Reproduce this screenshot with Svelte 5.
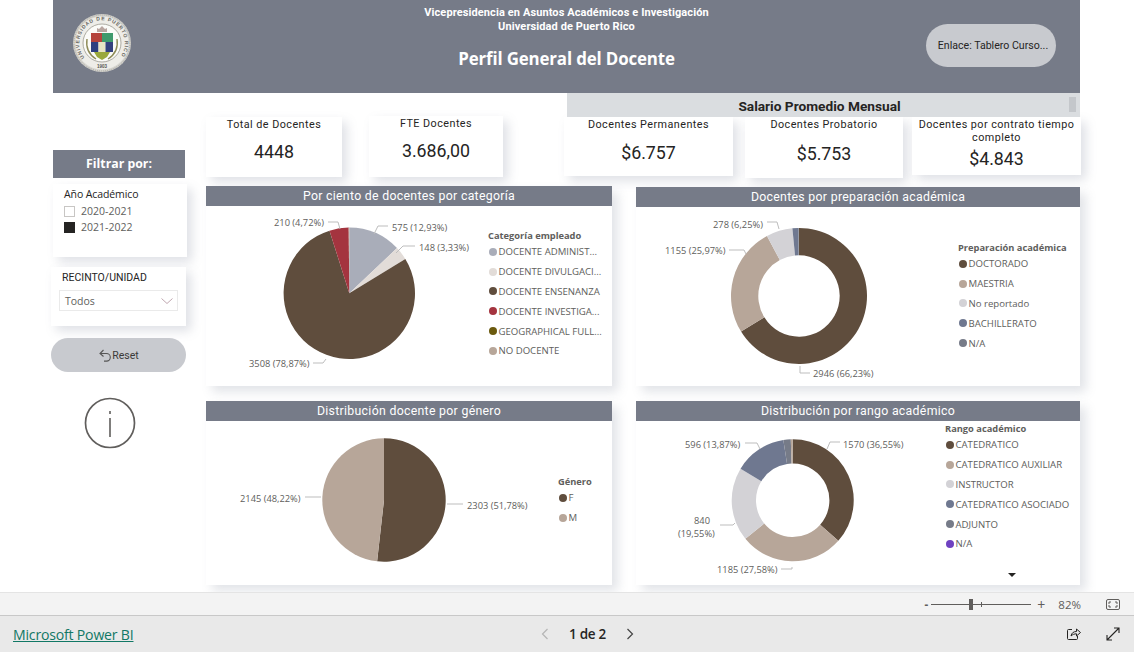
<script>
  const BROWN = '#5f4d3d', TAUPE = '#b7a699', LIGHT = '#d3d2d6', SLATE = '#6f7890', GREY = '#767b88';

  function polar(cx, cy, r, pct) {
    const a = (pct / 100) * Math.PI * 2;
    return [cx + r * Math.sin(a), cy - r * Math.cos(a)];
  }

  function slice(c, from, to) {
    const big = to - from > 50 ? 1 : 0;
    const [x1, y1] = polar(c.cx, c.cy, c.r, from);
    const [x2, y2] = polar(c.cx, c.cy, c.r, to);
    if (!c.inner) return `M${c.cx} ${c.cy}L${x1} ${y1}A${c.r} ${c.r} 0 ${big} 1 ${x2} ${y2}Z`;
    const [x3, y3] = polar(c.cx, c.cy, c.inner, to);
    const [x4, y4] = polar(c.cx, c.cy, c.inner, from);
    return `M${x1} ${y1}A${c.r} ${c.r} 0 ${big} 1 ${x2} ${y2}L${x3} ${y3}A${c.inner} ${c.inner} 0 ${big} 0 ${x4} ${y4}Z`;
  }

  function slices(c) {
    let at = 0;
    return c.parts.map(([pct, color]) => {
      const d = slice(c, at, at + pct);
      at += pct;
      return { d, color };
    });
  }

  // coordinates are local to each chart body, below the title strip
  const charts = [
    {
      title: 'Por ciento de docentes por categoría', cls: 'p1', w: 406, h: 179, svgW: 278,
      cx: 143.3, cy: 87.3, r: 65.7,
      parts: [[12.93, '#a9adb9'], [3.33, '#e2dcd8'], [78.87, BROWN], [4.72, '#a4343f'], [0.15, TAUPE]],
      labels: [
        { x: 186, y: 21, t: '575 (12,93%)' },
        { x: 213, y: 41, t: '148 (3,33%)' },
        { x: 68, y: 16, t: '210 (4,72%)' },
        { x: 43, y: 157, t: '3508 (78,87%)' }
      ],
      lines: ['M168 28L172 20H182', 'M190 47L197 40H209', 'M122 16H132L134 23', 'M107 157H117L120 153'],
      legendTitle: 'Categoría empleado', legendTop: 23,
      legend: [['DOCENTE ADMINIST...', '#a9adb9'], ['DOCENTE DIVULGACI...', '#e2dcd8'], ['DOCENTE ENSENANZA', BROWN], ['DOCENTE INVESTIGA...', '#a4343f'], ['GEOGRAPHICAL FULL...', '#6b5a0e'], ['NO DOCENTE', TAUPE]]
    },
    {
      title: 'Docentes por preparación académica', cls: 'p2', w: 444, h: 179, svgW: 318,
      cx: 163, cy: 89, r: 68, inner: 40.7,
      parts: [[66.23, BROWN], [25.97, TAUPE], [6.25, LIGHT], [1.4, SLATE], [0.15, GREY]],
      labels: [
        { x: 177, y: 166, t: '2946 (66,23%)' },
        { x: 29, y: 43, t: '1155 (25,97%)' },
        { x: 77, y: 17, t: '278 (6,25%)' }
      ],
      lines: ['M164 159V166H174', 'M93 43H108L110 47', 'M131 15H141L143 22'],
      legendTitle: 'Preparación académica', legendTop: 34,
      legend: [['DOCTORADO', BROWN], ['MAESTRIA', TAUPE], ['No reportado', LIGHT], ['BACHILLERATO', SLATE], ['N/A', GREY]]
    },
    {
      title: 'Distribución docente por género', cls: 'p3', w: 406, h: 164, svgW: 348,
      cx: 178, cy: 79, r: 61.7,
      parts: [[51.78, BROWN], [48.22, TAUPE]],
      labels: [
        { x: 34, y: 77, t: '2145 (48,22%)' },
        { x: 261, y: 84, t: '2303 (51,78%)' }
      ],
      lines: ['M99 76H115', 'M241 83H257'],
      legendTitle: 'Género', legendTop: 54,
      legend: [['F', BROWN], ['M', TAUPE]]
    },
    {
      title: 'Distribución por rango académico', cls: 'p4', w: 444, h: 164, svgW: 305,
      cx: 156.7, cy: 79.3, r: 61, inner: 36.7,
      parts: [[36.55, BROWN], [27.58, TAUPE], [19.55, LIGHT], [13.87, SLATE], [1.95, GREY], [0.5, TAUPE]],
      labels: [
        { x: 207, y: 23, t: '1570 (36,55%)' },
        { x: 49, y: 23, t: '596 (13,87%)' },
        { x: 58, y: 99, t: '840' },
        { x: 42, y: 112, t: '(19,55%)' },
        { x: 81, y: 148, t: '1185 (27,58%)' }
      ],
      lines: ['M191 28L194 21H204', 'M109 22H121L124 28', 'M84 104H97L99 102', 'M156 146V148H145'],
      legendTitle: 'Rango académico', legendTop: 1,
      legend: [['CATEDRATICO', BROWN], ['CATEDRATICO AUXILIAR', TAUPE], ['INSTRUCTOR', LIGHT], ['CATEDRATICO ASOCIADO', SLATE], ['ADJUNTO', GREY], ['N/A', '#6f42c1']],
      more: true
    }
  ];

  const kpis = [
    { label: 'Total de Docentes', value: '4448', cls: 'k1' },
    { label: 'FTE Docentes', value: '3.686,00', cls: 'k2' },
    { label: 'Docentes Permanentes', value: '$6.757', cls: 'k3' },
    { label: 'Docentes Probatorio', value: '$5.753', cls: 'k4' },
    { label: 'Docentes por contrato tiempo completo', value: '$4.843', cls: 'k5' }
  ];
</script>

<div class="page">
  <div class="canvas">
    <header class="banner">
      <div class="seal">
        <svg width="60" height="60" viewBox="0 0 60 60">
          <defs><path id="ring" d="M12.500 44.700A22.800 22.800 0 1 1 47.500 44.700" /></defs>
          <circle cx="30" cy="30" r="29" fill="#d6d5d0" />
          <circle cx="30" cy="30" r="28" fill="none" stroke="#a9a89f" stroke-width="1" stroke-dasharray="1 1" />
          <circle cx="30" cy="30" r="26.500" fill="#eeede8" />
          <text class="ring-text"><textPath href="#ring" textLength="100">UNIVERSIDAD DE PUERTO RICO</textPath></text>
          <circle cx="30" cy="30" r="19" fill="#fbfbf8" stroke="#8c8b80" stroke-width=".7" />
          <path d="M25 19v-4l2 1 3-3 3 3 2-1v4z" fill="#b9a6a0" />
          <rect x="19" y="20" width="11" height="9" fill="#b5433c" />
          <rect x="30" y="20" width="11" height="9" fill="#3f9a6c" />
          <rect x="19" y="29" width="7.500" height="10" fill="#2d3f80" />
          <rect x="26.500" y="29" width="7" height="10" fill="#e8e4c4" />
          <rect x="33.500" y="29" width="7.500" height="10" fill="#34407e" />
          <path d="M22 39h16l-3 5-5 3-5-3z" fill="#9aa83a" />
          <path d="M15 26q-2 13 9 20M45 26q2 13-9 20" fill="none" stroke="#8e8b57" stroke-width="1.400" />
          <text class="ring-year" x="30" y="55" text-anchor="middle">1903</text>
        </svg>
      </div>
      <div class="heading">
        <div class="org">Vicepresidencia en Asuntos Académicos e Investigación</div>
        <div class="org">Universidad de Puerto Rico</div>
        <h1>Perfil General del Docente</h1>
      </div>
      <div class="link-wrap"><button class="link-btn">Enlace: Tablero Curso...</button></div>
    </header>

    <div class="body">
      <aside class="side">
        <div class="filter-head">Filtrar por:</div>
        <div class="slicer year">
          <div class="slicer-title">Año Académico</div>
          <div class="opt first"><span class="box"></span>2020-2021</div>
          <div class="opt"><span class="box on"></span>2021-2022</div>
        </div>
        <div class="slicer campus">
          <div class="slicer-title">RECINTO/UNIDAD</div>
          <div class="select">
            <span>Todos</span>
            <svg width="12" height="6" viewBox="0 0 12 6"><path d="M.5.500L6 5.500 11.500.500" fill="none" stroke="#c0a8b0" /></svg>
          </div>
        </div>
        <button class="reset">
          <svg width="13" height="13" viewBox="0 0 13 13"><path d="M4.500 1L1 4.500 4.500 7.500M1 4.500h6.500a3.800 3.800 0 0 1 0 7.600H5" fill="none" stroke="#555" stroke-width="1.100" /></svg>Reset
        </button>
        <div class="info">
          <svg width="52" height="52" viewBox="0 0 52 52">
            <circle cx="26" cy="26" r="24.500" fill="none" stroke="#605e5c" stroke-width="1.700" />
            <path d="M26 21v19M26 14v3" stroke="#605e5c" stroke-width="1.600" />
          </svg>
        </div>
      </aside>

      <main class="main">
        <div class="band">
          <span>Salario Promedio Mensual</span>
          <i class="band-bar"></i>
        </div>
        <div class="kpis">
          {#each kpis as k}
            <div class="kpi {k.cls}">
              <div class="kpi-label">{k.label}</div>
              <div class="kpi-value">{k.value}</div>
            </div>
          {/each}
        </div>
        <div class="charts">
          {#each charts as c}
            <section class="panel {c.cls}">
              <h2>{c.title}</h2>
              <div class="chart-body" style="height:{c.h}px">
                <svg width={c.svgW} height={c.h} viewBox="0 0 {c.svgW} {c.h}">
                  {#each slices(c) as s}
                    <path d={s.d} fill={s.color} />
                  {/each}
                  {#each c.lines as l}
                    <path d={l} fill="none" stroke="#bdbdbd" stroke-width="1" />
                  {/each}
                  {#each c.labels as l}
                    <text class="lbl" x={l.x} y={l.y + 3.500}>{l.t}</text>
                  {/each}
                </svg>
                <div class="legend" style="padding-top:{c.legendTop}px">
                  <div class="legend-title">{c.legendTitle}</div>
                  {#each c.legend as [name, color]}
                    <div class="legend-item"><span class="dot" style="background:{color}"></span>{name}</div>
                  {/each}
                </div>
                {#if c.more}<span class="more"></span>{/if}
              </div>
            </section>
          {/each}
        </div>
      </main>
    </div>
  </div>

  <div class="zoombar">
    <span class="minus">-</span>
    <div class="slider"><i class="thumb"></i><i class="tick"></i></div>
    <span class="plus">+</span>
    <span class="pct">82%</span>
    <svg class="fit" width="14" height="11" viewBox="0 0 14 11">
      <rect x=".5" y=".5" width="13" height="10" rx="1.500" fill="none" stroke="#605e5c" />
      <path d="M3 5V3h2M9 3h2v2M11 6v2H9M5 8H3V6" fill="none" stroke="#605e5c" />
    </svg>
  </div>

  <footer class="foot">
    <a class="pbi" href="#top">Microsoft Power BI</a>
    <div class="pager">
      <svg width="8" height="12" viewBox="0 0 8 12"><path d="M6.500 1L1.500 6l5 5" fill="none" stroke="#b5b5b5" stroke-width="1.200" /></svg>
      <span>1 de 2</span>
      <svg width="8" height="12" viewBox="0 0 8 12"><path d="M1.500 1l5 5-5 5" fill="none" stroke="#444" stroke-width="1.200" /></svg>
    </div>
    <div class="foot-icons">
      <svg width="14" height="14" viewBox="0 0 14 14">
        <path d="M5 2.500H1.500a1 1 0 0 0-1 1v8a1 1 0 0 0 1 1h8a1 1 0 0 0 1-1V9" fill="none" stroke="#252423" />
        <path d="M4 9c.5-3 2.500-4.500 5.500-4.500V2L13.500 5.500 9.500 9V6.800C7.500 6.800 5.500 7.500 4 9z" fill="none" stroke="#252423" />
      </svg>
      <svg width="14" height="14" viewBox="0 0 14 14"><path d="M1 13L13 1M8 1h5v5M1 8v5h5" fill="none" stroke="#252423" stroke-width="1.100" /></svg>
    </div>
  </footer>
</div>

<style>
  :global(body) {
    background: #fff;
  }
  .page {
    width: 1134px;
    height: 652px;
    display: flex;
    flex-direction: column;
    overflow: hidden;
    font-family: "Open Sans", "Liberation Sans", sans-serif;
  }
  .canvas {
    height: 592px;
    padding-left: 51px;
    box-sizing: border-box;
  }

  .banner {
    margin-left: 2px;
    width: 1027px;
    height: 93px;
    background: #767b88;
    display: grid;
    grid-template-columns: 1fr auto 1fr;
    color: #fff;
  }
  .seal {
    padding: 12.500px 0 0 19px;
  }
  .ring-text {
    font: 700 5px "Liberation Sans", sans-serif;
    fill: #66665f;
  }
  .ring-year {
    font: 700 4.500px "Liberation Sans", sans-serif;
    fill: #55564f;
  }
  .heading {
    text-align: center;
    padding-top: 6px;
  }
  .org {
    font: 700 11px/14px Roboto, sans-serif;
    letter-spacing: .1px;
  }
  h1 {
    margin: 13px 0 0;
    font: 700 16.900px/24px "Open Sans", sans-serif;
    letter-spacing: -.15px;
  }
  .link-wrap {
    display: flex;
    justify-content: flex-end;
    padding: 24px 24px 0 0;
  }
  .link-btn {
    width: 130px;
    height: 43px;
    border: 0;
    border-radius: 22px;
    background: #c8cacf;
    color: #252423;
    font: 400 10.600px Roboto, sans-serif;
    padding: 0 0 0 4px;
  }

  .body {
    display: flex;
  }
  .side {
    width: 155px;
    padding-top: 57px;
    flex: none;
  }
  .filter-head {
    margin-left: 2px;
    width: 132px;
    height: 28px;
    background: #767b88;
    color: #fff;
    font: 700 12.300px/28px "Open Sans", sans-serif;
    text-align: center;
  }
  .slicer {
    background: #fff;
    box-shadow: 5px 5px 10px rgba(110, 120, 140, .22);
    box-sizing: border-box;
    color: #252423;
  }
  .year {
    margin: 6px 0 0 2px;
    width: 134px;
    height: 73px;
    padding: 4px 0 0 11px;
  }
  .slicer-title {
    font: 400 10.500px/13px Roboto, sans-serif;
  }
  .year .slicer-title {
    font-family: "Open Sans", sans-serif;
    letter-spacing: -.1px;
  }
  .opt {
    display: flex;
    align-items: center;
    gap: 6px;
    height: 16px;
    font: 400 10.500px "Open Sans", sans-serif;
    color: #605e5c;
  }
  .opt.first {
    margin-top: 2px;
  }
  .box {
    width: 9px;
    height: 9px;
    border: 1px solid #c8c6c4;
  }
  .box.on {
    background: #252423;
    border-color: #252423;
  }
  .campus {
    margin-top: 10px;
    width: 135px;
    height: 59px;
    padding: 4px 8px 0;
  }
  .campus .slicer-title {
    margin-left: 3px;
  }
  .select {
    margin-top: 6px;
    height: 21px;
    border: 1px solid #eaeaea;
    box-sizing: border-box;
    display: flex;
    align-items: center;
    justify-content: space-between;
    padding: 0 4px 0 5px;
    font: 400 10.500px "Open Sans", sans-serif;
    color: #605e5c;
  }
  .reset {
    display: flex;
    align-items: center;
    justify-content: center;
    margin-top: 12px;
    width: 135px;
    height: 34px;
    border: 0;
    border-radius: 17px;
    background: #c8cacf;
    color: #3b3a39;
    font: 400 10.500px Roboto, sans-serif;
    padding: 0 0 0 1px;
  }
  .info {
    margin: 25px 0 0 33px;
  }

  .main {
    width: 875px;
    flex: none;
  }
  .band {
    margin-left: 361px;
    width: 513px;
    height: 24px;
    box-sizing: border-box;
    padding-right: 8px;
    background: #dadde0;
    position: relative;
    text-align: center;
    font: 700 13.700px/27px Roboto, "Open Sans", sans-serif;
    color: #252423;
  }
  .band-bar {
    position: absolute;
    top: 4px;
    right: 4px;
    width: 7px;
    height: 15px;
    background: #c4c7cb;
  }

  .kpis {
    display: flex;
    align-items: flex-start;
    height: 69px;
  }
  .kpi {
    background: #fff;
    box-shadow: 5px 5px 10px rgba(110, 120, 140, .22);
    text-align: center;
    box-sizing: border-box;
    flex: none;
    color: #252423;
  }
  .kpi-label {
    font: 400 10.800px/13px Roboto, sans-serif;
    letter-spacing: .45px;
    padding-top: 1px;
  }
  .kpi-value {
    font: 400 17.800px/22px Roboto, sans-serif;
    padding-top: 10px;
  }
  .k1 {
    width: 136px;
    height: 60px;
  }
  .k2 {
    width: 134px;
    height: 61px;
    margin: -1px 0 0 27px;
  }
  .k3 {
    width: 169px;
    height: 59px;
    margin-left: 61px;
  }
  .k3 .kpi-value {
    padding-top: 11px;
  }
  .k4 {
    width: 158px;
    height: 61px;
    margin-left: 12px;
  }
  .k4 .kpi-value {
    padding-top: 12px;
  }
  .k5 {
    width: 169px;
    height: 58px;
    margin-left: 9px;
  }
  .k5 .kpi-value {
    padding-top: 4px;
  }

  .charts {
    display: grid;
    grid-template-columns: 406px 444px;
    column-gap: 24px;
    row-gap: 15px;
  }
  .panel {
    background: #fff;
    box-shadow: 6px 6px 10px rgba(110, 120, 140, .2);
  }
  .p2 {
    margin-top: 1px;
  }
  h2 {
    margin: 0;
    height: 20px;
    background: #767b88;
    color: #fff;
    text-align: center;
    font: 400 12.300px/20px Roboto, sans-serif;
    letter-spacing: .3px;
  }
  .chart-body {
    display: flex;
    position: relative;
  }
  .lbl {
    font: 400 9.300px "Open Sans", sans-serif;
    fill: #605e5c;
  }
  .legend {
    padding-left: 4px;
    font: 400 9.600px "Open Sans", sans-serif;
    color: #605e5c;
    white-space: nowrap;
  }
  .legend-title {
    font-weight: 700;
    font-size: 9.300px;
    line-height: 13px;
  }
  .legend-item {
    display: flex;
    align-items: center;
    height: 19.800px;
    gap: 1.500px;
    margin-left: 1px;
  }
  .dot {
    width: 8px;
    height: 8px;
    border-radius: 50%;
    flex: none;
  }
  .more {
    position: absolute;
    right: 64px;
    bottom: 8px;
    border: 4px solid transparent;
    border-top: 4px solid #252423;
    border-bottom: 0;
  }

  .zoombar {
    height: 23px;
    box-sizing: border-box;
    background: #f3f3f3;
    border-top: 1px solid #e4e4e4;
    display: flex;
    align-items: center;
    justify-content: flex-end;
    padding-right: 14px;
    color: #605e5c;
    font: 400 11.500px "Open Sans", sans-serif;
  }
  .minus {
    font-weight: 700;
    margin-right: 3px;
  }
  .slider {
    position: relative;
    width: 100px;
    height: 1px;
    background: #605e5c;
  }
  .thumb {
    position: absolute;
    left: 38px;
    top: -5px;
    width: 4px;
    height: 11px;
    background: #605e5c;
  }
  .tick {
    position: absolute;
    left: 50px;
    top: -2px;
    width: 1px;
    height: 5px;
    background: #605e5c;
  }
  .plus {
    font-size: 14px;
    margin: 0 13px 0 6px;
  }
  .pct {
    margin-right: 25px;
  }

  .foot {
    flex: 1;
    box-sizing: border-box;
    background: #e9e9e9;
    border-top: 1px solid #c8c8c8;
    display: flex;
    align-items: center;
    padding: 0 14px 0 13px;
  }
  .pbi {
    color: #117865;
    font-size: 14.100px;
    letter-spacing: -.2px;
    width: 528px;
  }
  .pager {
    display: flex;
    align-items: center;
    gap: 20px;
    font-size: 13.500px;
    font-weight: 600;
    letter-spacing: -.3px;
    color: #252423;
  }
  .foot-icons {
    margin-left: auto;
    display: flex;
    gap: 25px;
  }
</style>
